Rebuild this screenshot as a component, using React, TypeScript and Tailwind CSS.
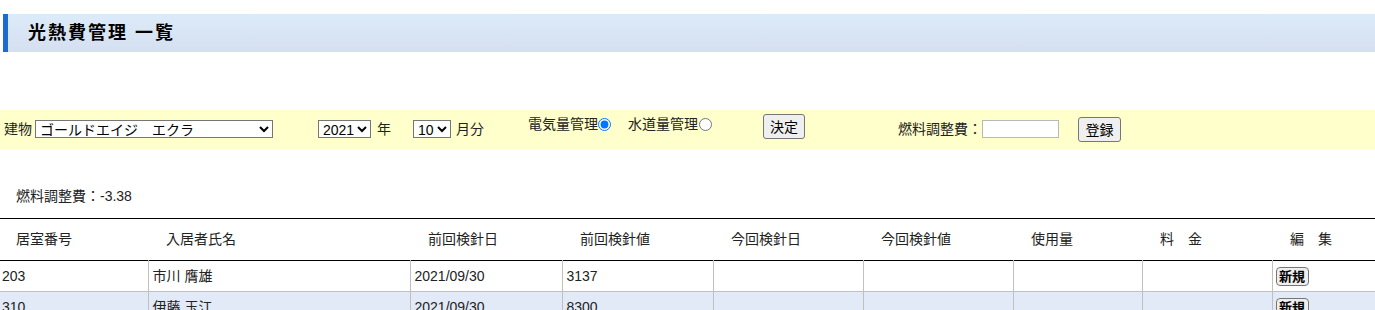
import React from "react";

const font = { fontFamily: '"Liberation Sans", "Noto Sans CJK JP", sans-serif' };

const cols = [148, 262, 152, 151, 150, 150, 129, 130, 103];
const heads = ["居室番号", "入居者氏名", "前回検針日", "前回検針値", "今回検針日", "今回検針値", "使用量", "料　金", "編　集"];

const rows = [
  { no: "203", name: "市川 膺雄", date: "2021/09/30", val: "3137", bg: "bg-white" },
  { no: "310", name: "伊藤 玉江", date: "2021/09/30", val: "8300", bg: "bg-[#e3eaf7]" },
];

export default function App() {
  return (
    <div className="w-[1375px] h-[310px] overflow-hidden bg-white text-[14px] text-[#222]" style={font}>
      <div className="h-[14px]" />
      <div className="ml-[3px] h-[38px] flex items-center border-l-[5px] border-[#1a6cd0] bg-gradient-to-b from-[#dcebf9] to-[#d5dff0]">
        <h1 className="pl-[20px] text-[18px] font-bold tracking-[2px] text-black leading-none">光熱費管理 一覧</h1>
      </div>
      <div className="h-[58px]" />
      <div className="h-[40px] bg-[#ffffcc] flex items-start pl-[4px]">
        <span className="mt-[10px] leading-[18px]">建物</span>
        <select className="ml-[3px] mt-[10px] w-[238px] h-[18px] border border-[#767676] bg-white text-[14px] leading-[16px] rounded-none text-black" defaultValue="a">
          <option value="a">ゴールドエイジ　エクラ</option>
        </select>
        <select className="ml-[45px] mt-[10px] w-[53px] h-[18px] border border-[#767676] bg-white text-[14px] leading-[16px] rounded-none text-black" defaultValue="2021">
          <option value="2021">2021</option>
        </select>
        <span className="ml-[6px] mt-[10px] leading-[18px]">年</span>
        <select className="ml-[22px] mt-[10px] w-[38px] h-[18px] border border-[#767676] bg-white text-[14px] leading-[16px] rounded-none text-black" defaultValue="10">
          <option value="10">10</option>
        </select>
        <span className="ml-[5px] mt-[10px] leading-[18px]">月分</span>
        <span className="ml-[44px] mt-[5px] leading-[18px]">電気量管理</span>
        <input type="radio" name="m" defaultChecked className="mt-[8px] w-[13px] h-[13px]" />
        <span className="ml-[17px] mt-[5px] leading-[18px]">水道量管理</span>
        <input type="radio" name="m" className="ml-[1px] mt-[8px] w-[13px] h-[13px]" />
        <button className="ml-[51px] mt-[4px] w-[42px] h-[25px] border border-[#767676] bg-[#efefef] rounded-[3px] text-[14px] leading-none text-black">決定</button>
        <span className="ml-[93px] mt-[10px] leading-[18px]">燃料調整費：</span>
        <input type="text" className="mt-[10px] w-[77px] h-[18px] border border-[#b8b8b8] bg-white" />
        <button className="ml-[19px] mt-[7px] w-[43px] h-[25px] border border-[#767676] bg-[#efefef] rounded-[3px] text-[14px] leading-none text-black">登録</button>
      </div>
      <div className="h-[37px]" />
      <div className="pl-[16px] leading-[18px]">燃料調整費：-3.38</div>
      <div className="h-[13px]" />
      <table className="table-fixed border-collapse w-[1375px]">
        <colgroup>
          {cols.map((w, i) => (
            <col key={i} style={{ width: w }} />
          ))}
        </colgroup>
        <thead>
          <tr className="h-[42px] border-t border-b border-black">
            {heads.map((h, i) => (
              <th key={i} className={`text-left font-normal ${i === 0 ? "pl-[16px]" : "pl-[18px]"} p-0`}>
                {h}
              </th>
            ))}
          </tr>
        </thead>
        <tbody>
          {rows.map((r, ri) => (
            <tr key={ri} className={`h-[31px] border-b border-[#c0c0c0] ${r.bg}`}>
              <td className="pl-[2px] border-r border-[#c0c0c0]">{r.no}</td>
              <td className="pl-[4px] border-r border-[#c0c0c0]">{r.name}</td>
              <td className="pl-[4px] border-r border-[#c0c0c0]">{r.date}</td>
              <td className="pl-[4px] border-r border-[#c0c0c0]">{r.val}</td>
              <td className="border-r border-[#c0c0c0]"></td>
              <td className="border-r border-[#c0c0c0]"></td>
              <td className="border-r border-[#c0c0c0]"></td>
              <td className="border-r border-[#c0c0c0]"></td>
              <td className="pl-[3px]">
                <button className="w-[33px] h-[19px] border border-[#767676] bg-[#efefef] rounded-[4px] text-[13px] font-bold leading-none text-black">新規</button>
              </td>
            </tr>
          ))}
        </tbody>
      </table>
    </div>
  );
}
